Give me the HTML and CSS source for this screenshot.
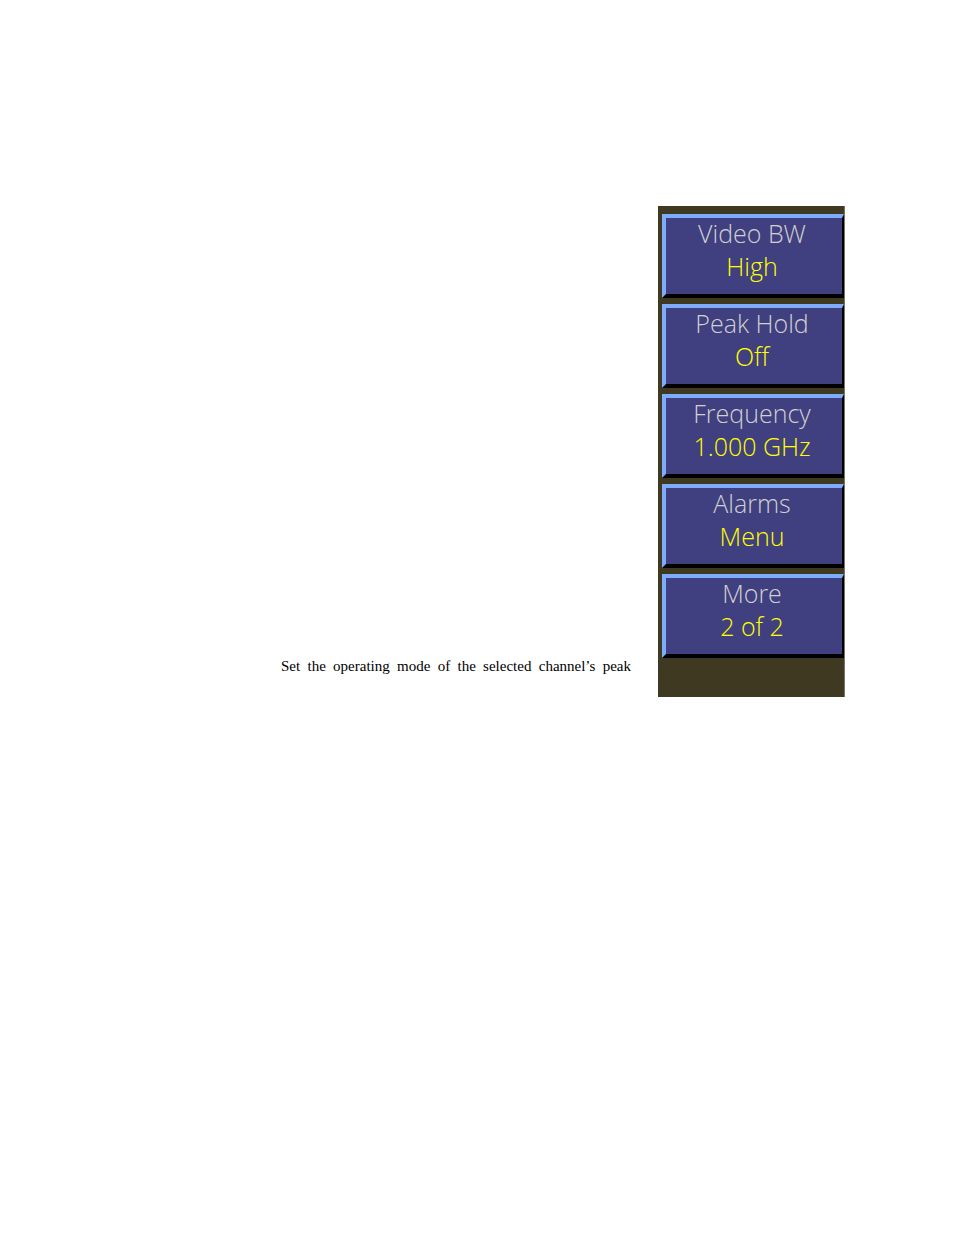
FILE: index.html
```html
<!DOCTYPE html>
<html lang="en">
<head>
    <meta charset="UTF-8">
    <meta name="viewport" content="width=device-width, initial-scale=1.0">
    <title>Channel Menu</title>
    <link rel="stylesheet" href="styles.css">
</head>
<body>
    <main class="manual-page">
        <p class="description">Set the operating mode of the selected channel’s peak</p>

        <nav class="menu" aria-label="Channel menu">
            <button type="button" class="menu-key">
                <span class="key-label">Video BW</span>
                <span class="key-value">High</span>
            </button>
            <button type="button" class="menu-key">
                <span class="key-label">Peak Hold</span>
                <span class="key-value">Off</span>
            </button>
            <button type="button" class="menu-key">
                <span class="key-label">Frequency</span>
                <span class="key-value">1.000 GHz</span>
            </button>
            <button type="button" class="menu-key">
                <span class="key-label">Alarms</span>
                <span class="key-value">Menu</span>
            </button>
            <button type="button" class="menu-key">
                <span class="key-label">More</span>
                <span class="key-value">2 of 2</span>
            </button>
        </nav>
    </main>
</body>
</html>
```

FILE: styles.css
```css
* {
    margin: 0;
    padding: 0;
    box-sizing: border-box;
}

body {
    font-family: "Liberation Serif", "Times New Roman", serif;
    background: #fff;
    color: #000;
    min-height: 100vh;
}

.manual-page {
    display: flex;
    align-items: flex-end;
    gap: 27px;
    padding: 206px 109px 48px 281px;
}

.description {
    flex: 1;
    padding-bottom: 21px;
    font-size: 15px;
    line-height: 20px;
    text-align: justify;
    text-align-last: justify;
}

.menu {
    flex: none;
    width: 187px;
    display: flex;
    flex-direction: column;
    gap: 6px;
    padding: 8px 0 39px 4px;
    background: #403922;
    border-right: 1px solid #77746c;
}

.menu-key {
    display: flex;
    flex-direction: column;
    align-items: center;
    gap: 2px;
    padding: 0 4px 12px 0;
    background: #403f7f;
    border: 4px solid #7eacfc;
    border-right: 2px solid #000;
    border-bottom-color: #000;
    font-family: "Open Sans", "Noto Sans", sans-serif;
    font-size: 25px;
    font-weight: 300;
    line-height: 31px;
    cursor: pointer;
}

.key-label {
    color: #d0d0d0;
}

.key-value {
    color: #ff0;
}
```
